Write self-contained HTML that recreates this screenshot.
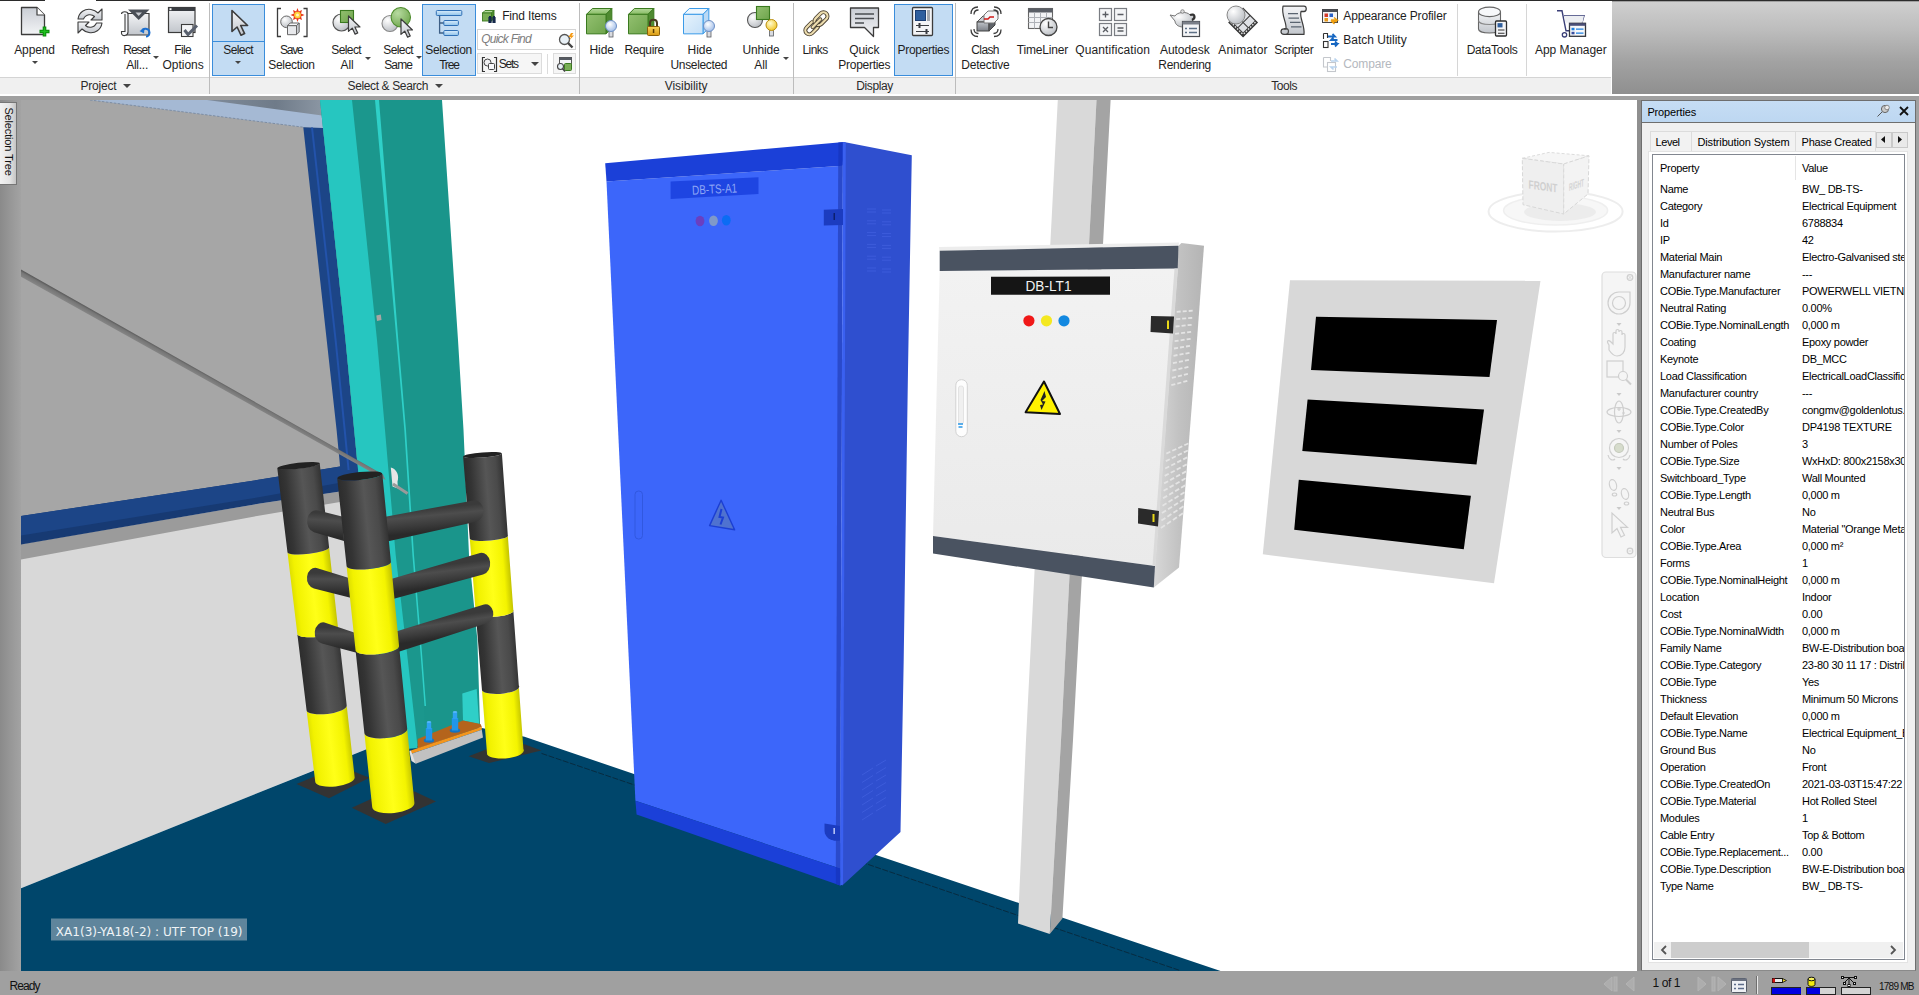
<!DOCTYPE html><html><head><meta charset="utf-8"><title>Navisworks</title><style>

*{box-sizing:border-box;margin:0;padding:0}
html,body{width:1919px;height:995px;overflow:hidden;background:#a0a0a0;font-family:"Liberation Sans",sans-serif;font-size:12px;color:#1e1e1e}
#app{position:relative;width:1919px;height:995px;overflow:hidden}
.abs{position:absolute}
#topline{left:0;top:0;width:1919px;height:1px;background:#2b2b2b}
#topgap{left:45px;top:0;width:51px;height:1px;background:#fff}
#ribbon{left:0;top:1px;width:1612px;height:94px;background:#fff}
#rlabels{left:0;top:77px;width:1611px;height:18px;background:#f0f0f0;border-top:1px solid #d4d4d4;border-bottom:1px solid #d9d9d9}
#rgray{left:1612px;top:2px;width:307px;height:92px;background:linear-gradient(#cfcfcf 0%,#bdbdbd 30%,#a2a2a2 65%,#8f8f8f 100%)}
#rwhite{left:0;top:94px;width:1919px;height:2px;background:#fff}
.gsep{position:absolute;top:0;width:1px;height:92px;background:#b9b9b9}
.gsep2{position:absolute;top:4px;width:1px;height:70px;background:#d5d5d5}
.glabel{position:absolute;top:77px;height:15px;line-height:15px;text-align:center;font-size:12px;color:#2a2a2a;white-space:nowrap}
.big{position:absolute;top:2px;text-align:center;white-space:nowrap;font-size:12px;line-height:15px;color:#1e1e1e}
.big svg{display:block;margin:1px auto 3px auto}
.big .t{display:block}
.hl{position:absolute;background:#c3dcf3;border:1px solid #3a8ddb}
.sm{position:absolute;height:20px;line-height:20px;white-space:nowrap;font-size:12px}
.sm svg{position:absolute;left:0;top:2px}
.sm span{position:absolute;left:22px;top:0}
.dd{position:absolute;width:0;height:0;border-left:3px solid transparent;border-right:3px solid transparent;border-top:3px solid #444}

.lsf{font-family:"Liberation Sans",sans-serif}.dvf{font-family:"DejaVu Sans","Liberation Sans",sans-serif}.tx{position:absolute;white-space:nowrap}.lt{position:absolute;white-space:nowrap;line-height:13px}
</style></head><body><div id="app">

<svg width="0" height="0" style="position:absolute"><defs>
<linearGradient id="gPage" x1="0" y1="0" x2="0" y2="1"><stop offset="0" stop-color="#c9cdd4"/><stop offset="1" stop-color="#f3f4f6"/></linearGradient>
<linearGradient id="gGray" x1="0" y1="0" x2="0" y2="1"><stop offset="0" stop-color="#f4f5f7"/><stop offset="1" stop-color="#c2c6cc"/></linearGradient>
<linearGradient id="gGreen" x1="0" y1="0" x2="1" y2="1"><stop offset="0" stop-color="#93c070"/><stop offset="1" stop-color="#6ea44c"/></linearGradient>
<linearGradient id="gGreenT" x1="0" y1="0" x2="0" y2="1"><stop offset="0" stop-color="#b4d99a"/><stop offset="1" stop-color="#86ba63"/></linearGradient>
<radialGradient id="gBulb" cx=".4" cy=".35" r=".7"><stop offset="0" stop-color="#ffffff"/><stop offset="1" stop-color="#9dbbe8"/></radialGradient>
<radialGradient id="gBulbY" cx=".4" cy=".35" r=".7"><stop offset="0" stop-color="#fffbd0"/><stop offset="1" stop-color="#f2c521"/></radialGradient>
<radialGradient id="gSph" cx=".35" cy=".3" r=".8"><stop offset="0" stop-color="#ffffff"/><stop offset="1" stop-color="#b5b9bf"/></radialGradient>
<radialGradient id="gSphG" cx=".35" cy=".3" r=".8"><stop offset="0" stop-color="#b7dba0"/><stop offset="1" stop-color="#6ea54c"/></radialGradient>
<linearGradient id="gBlueBar" x1="0" y1="0" x2="0" y2="1"><stop offset="0" stop-color="#d9ecfb"/><stop offset="1" stop-color="#8fc3ea"/></linearGradient>
<linearGradient id="gGold" x1="0" y1="0" x2="0" y2="1"><stop offset="0" stop-color="#fbd25a"/><stop offset="1" stop-color="#d89a12"/></linearGradient>
<linearGradient id="gLBlue" x1="0" y1="0" x2="1" y2="1"><stop offset="0" stop-color="#e6f2fc"/><stop offset="1" stop-color="#c5e0f7"/></linearGradient>
<linearGradient id="gDark" x1="0" y1="0" x2="0" y2="1"><stop offset="0" stop-color="#bfc3c9"/><stop offset="1" stop-color="#7c8087"/></linearGradient>
</defs></svg>

<div class="abs" id="topline"></div><div class="abs" id="topgap"></div>
<div class="abs" id="ribbon">
</div>
<div class="abs" id="rgray"></div>
<div class="abs" id="rlabels"></div>
<div class="abs" id="rwhite"></div>
<div class="hl" style="left:212px;top:4px;width:53px;height:72px"></div>
<div class="hl" style="left:422px;top:4px;width:53.5px;height:72px"></div>
<div class="hl" style="left:894px;top:4px;width:59px;height:72px"></div>
<div class="abs" style="left:213px;top:41px;width:51px;height:1px;background:#3a8ddb"></div>
<div class="abs" style="left:209px;top:3px;width:1px;height:91px;background:#bcbcbc"></div>
<div class="abs" style="left:579px;top:3px;width:1px;height:91px;background:#bcbcbc"></div>
<div class="abs" style="left:793px;top:3px;width:1px;height:91px;background:#bcbcbc"></div>
<div class="abs" style="left:955px;top:3px;width:1px;height:91px;background:#bcbcbc"></div>
<div class="abs" style="left:1457px;top:4px;width:1px;height:72px;background:#d6d6d6"></div>
<div class="abs" style="left:1526px;top:4px;width:1px;height:72px;background:#d6d6d6"></div>
<div class="abs" style="left:1611px;top:2px;width:1px;height:92px;background:#fff"></div>
<svg class="abs" style="left:19.0px;top:5px" width="32" height="32" viewBox="0 0 32 32" overflow="visible"><g transform="translate(-3 0)"><path d="M5.5,2.5 H21 L28.5,10 V29.5 H5.5 Z" fill="url(#gPage)" stroke="#3c3c3c" stroke-width="1.3" stroke-linejoin="round"/><path d="M21,2.5 V10 H28.5" fill="#fff" stroke="#3c3c3c" stroke-width="1.2" stroke-linejoin="round"/><path d="M28.5,21.5 V31.5 M23.5,26.5 H33.5" stroke="#0a8a0a" stroke-width="3.6"/><path d="M28.5,22.5 V30.5 M24.5,26.5 H32.5" stroke="#1fc01f" stroke-width="1.6"/></g></svg>
<span class="tx" style="left:14.2px;top:44.1px;font-size:12px;line-height:13.8px;letter-spacing:-0.11px;color:#1e1e1e;">Append</span>
<div class="dd" style="left:32px;top:61px"></div>
<svg class="abs" style="left:74.0px;top:5px" width="32" height="32" viewBox="0 0 32 32" overflow="visible"><path d="M4,14 C5,7 11,3.5 17,4.5 C20,5 22,6 24,8 L28,4 V15 H17 L20.5,11.5 C18,9 12,8.5 9.5,14 Z" fill="url(#gGray)" stroke="#3c3c3c" stroke-width="1.1" stroke-linejoin="round"/><path d="M28,18 C27,25 21,28.5 15,27.5 C12,27 10,26 8,24 L4,28 V17 H15 L11.5,20.5 C14,23 20,23.5 22.5,18 Z" fill="url(#gGray)" stroke="#3c3c3c" stroke-width="1.1" stroke-linejoin="round"/></svg>
<span class="tx" style="left:71.3px;top:44.1px;font-size:12px;line-height:13.8px;letter-spacing:-0.64px;color:#1e1e1e;">Refresh</span>
<svg class="abs" style="left:121.0px;top:5px" width="32" height="32" viewBox="0 0 32 32" overflow="visible"><path d="M7,8.500 H28 V30 H4" fill="url(#gGray)" stroke="#3c3c3c" stroke-width="1.200"/><path d="M0.500,9 C0.500,6 7,6 7,9 V27 C7,31 1,32 0.500,28.500 V26.500 H4 V9" fill="#f4f5f8" stroke="#3c3c3c" stroke-width="1.100"/><path d="M7,4.500 H28.500 L17.700,15 Z" fill="#4a4f57"/><path d="M14.500,7.500 H21 L17.700,11 Z" fill="#c9ccd2"/><path d="M20.500,26.500 C22,22.500 28,23 28.500,27.500 C28.500,30 26.500,31.500 25,31.500" fill="none" stroke="#1b6fd0" stroke-width="2"/><path d="M18.500,26 L23.500,23.500 L23,28.500 Z" fill="#1b6fd0"/></svg>
<span class="tx" style="left:123.3px;top:44.1px;font-size:12px;line-height:13.8px;letter-spacing:-1.04px;color:#1e1e1e;">Reset</span>
<span class="tx" style="left:126.2px;top:58.7px;font-size:12px;line-height:13.8px;letter-spacing:-0.25px;color:#1e1e1e;">All...</span>
<div class="dd" style="left:153px;top:56px"></div>
<svg class="abs" style="left:167.0px;top:5px" width="32" height="32" viewBox="0 0 32 32" overflow="visible"><rect x="1.500" y="2.500" width="26.500" height="25" fill="url(#gGray)" stroke="#3c3c3c" stroke-width="1.200"/><rect x="1.500" y="2.500" width="26.500" height="3.500" fill="#3a3d42"/><rect x="2.500" y="3.200" width="2" height="2" fill="#fff"/><rect x="14.500" y="19.500" width="11.500" height="12" fill="#f4f5f7" stroke="#3c3c3c" stroke-width="1.100"/><path d="M17.500,25 L21,29.500 L30,20.500" fill="none" stroke="#59606e" stroke-width="3"/></svg>
<span class="tx" style="left:174.2px;top:44.1px;font-size:12px;line-height:13.8px;letter-spacing:-0.61px;color:#1e1e1e;">File</span>
<span class="tx" style="left:162.5px;top:58.7px;font-size:12px;line-height:13.8px;letter-spacing:-0.03px;color:#1e1e1e;">Options</span>
<svg class="abs" style="left:222.0px;top:5px" width="32" height="32" viewBox="0 0 32 32" overflow="visible"><path transform="translate(10,5.5) scale(1.5)" d="M0,0 L0,14 L3.4,11 L6,16.5 L8.4,15.4 L5.8,10 L10.4,10 Z" fill="url(#gGray)" stroke="#3c3c3c" stroke-width="1.1" stroke-linejoin="round"/></svg>
<span class="tx" style="left:223.3px;top:44.1px;font-size:12px;line-height:13.8px;letter-spacing:-0.59px;color:#1e1e1e;">Select</span>
<div class="dd" style="left:235px;top:61px"></div>
<svg class="abs" style="left:276.0px;top:5px" width="32" height="32" viewBox="0 0 32 32" overflow="visible"><path d="M5,3.500 H1.500 V31.500 H5 M27.500,3.500 H31 V31.500 H27.500" fill="none" stroke="#3c3c3c" stroke-width="1.300"/><circle cx="10.500" cy="16.800" r="5.800" fill="url(#gSph)" stroke="#666" stroke-width="1"/><path d="M11.5,20.7 L14.2,18 L23.2,18 L20.5,20.7 Z" fill="#f6f6f8" stroke="#666" stroke-width="1" stroke-linejoin="round"/><path d="M20.5,20.7 L23.2,18 L23.2,27 L20.5,29.7 Z" fill="#c9cbd0" stroke="#666" stroke-width="1" stroke-linejoin="round"/><rect x="11.5" y="20.7" width="9" height="9" fill="#e8e9ec" stroke="#666" stroke-width="1" stroke-linejoin="round"/><g transform="translate(-1.500 1.500)"><path d="M23,1.500 L24.300,5 L27.500,3.500 L26.500,7 L30,8.500 L26.500,10 L27.500,13.500 L24.300,12 L23,15.500 L21.700,12 L18.500,13.500 L19.500,10 L16,8.500 L19.500,7 L18.500,3.500 L21.700,5 Z" fill="#e8381a"/><circle cx="23" cy="8.500" r="3.300" fill="#ffd23a"/><circle cx="23" cy="8.500" r="1.500" fill="#fff8c0"/></g></svg>
<span class="tx" style="left:280.0px;top:44.1px;font-size:12px;line-height:13.8px;letter-spacing:-1.20px;color:#1e1e1e;">Save</span>
<span class="tx" style="left:268.3px;top:58.7px;font-size:12px;line-height:13.8px;letter-spacing:-0.33px;color:#1e1e1e;">Selection</span>
<svg class="abs" style="left:330.5px;top:5px" width="32" height="32" viewBox="0 0 32 32" overflow="visible"><circle cx="10.500" cy="17.500" r="8.500" fill="url(#gSph)" stroke="#555" stroke-width="1.200"/><rect x="9.500" y="5.500" width="13" height="12" fill="url(#gGreen)" stroke="#3a7a1f" stroke-width="1.100"/><path transform="translate(17.5,11) scale(1.1)" d="M0,0 L0,14 L3.4,11 L6,16.5 L8.4,15.4 L5.8,10 L10.4,10 Z" fill="url(#gGray)" stroke="#3c3c3c" stroke-width="1.1" stroke-linejoin="round"/></svg>
<span class="tx" style="left:331.3px;top:44.1px;font-size:12px;line-height:13.8px;letter-spacing:-0.59px;color:#1e1e1e;">Select</span>
<span class="tx" style="left:340.5px;top:58.7px;font-size:12px;line-height:13.8px;letter-spacing:-0.07px;color:#1e1e1e;">All</span>
<div class="dd" style="left:365px;top:57px"></div>
<svg class="abs" style="left:382.0px;top:5px" width="32" height="32" viewBox="0 0 32 32" overflow="visible"><circle cx="8" cy="18.500" r="8" fill="url(#gSph)" stroke="#888" stroke-width="1.100"/><circle cx="18.800" cy="12.200" r="9.700" fill="url(#gSphG)" stroke="#4d8c2c" stroke-width="1.100"/><path transform="translate(19,14) scale(1.1)" d="M0,0 L0,14 L3.4,11 L6,16.5 L8.4,15.4 L5.8,10 L10.4,10 Z" fill="url(#gGray)" stroke="#3c3c3c" stroke-width="1.1" stroke-linejoin="round"/></svg>
<span class="tx" style="left:383.3px;top:44.1px;font-size:12px;line-height:13.8px;letter-spacing:-0.59px;color:#1e1e1e;">Select</span>
<span class="tx" style="left:384.2px;top:58.7px;font-size:12px;line-height:13.8px;letter-spacing:-0.85px;color:#1e1e1e;">Same</span>
<div class="dd" style="left:416px;top:56px"></div>
<svg class="abs" style="left:433.0px;top:5px" width="32" height="32" viewBox="0 0 32 32" overflow="visible"><path d="M6.600,10.500 V28 H11 M6.600,18 H11" fill="none" stroke="#3d5f86" stroke-width="1.300"/><rect x="3.300" y="5.500" width="25.500" height="5" rx="1" fill="url(#gBlueBar)" stroke="#2f6fb5" stroke-width="1"/><rect x="10.800" y="15.500" width="14.600" height="5" rx="1" fill="url(#gBlueBar)" stroke="#2f6fb5" stroke-width="1"/><rect x="10.800" y="25.500" width="14.600" height="5" rx="1" fill="url(#gBlueBar)" stroke="#2f6fb5" stroke-width="1"/></svg>
<span class="tx" style="left:425.3px;top:44.1px;font-size:12px;line-height:13.8px;letter-spacing:-0.31px;color:#1e1e1e;">Selection</span>
<span class="tx" style="left:439.2px;top:58.7px;font-size:12px;line-height:13.8px;letter-spacing:-1.20px;color:#1e1e1e;">Tree</span>
<svg class="abs" style="left:585.5px;top:5px" width="32" height="32" viewBox="0 0 32 32" overflow="visible"><path d="M0.5,9.35 L6.35,3.5 L25.85,3.5 L20.0,9.35 Z" fill="url(#gGreenT)" stroke="#3a7a1f" stroke-width="1" stroke-linejoin="round"/><path d="M20.0,9.35 L25.85,3.5 L25.85,23.0 L20.0,28.85 Z" fill="#4f8a30" stroke="#3a7a1f" stroke-width="1" stroke-linejoin="round"/><rect x="0.5" y="9.35" width="19.5" height="19.5" fill="url(#gGreen)" stroke="#3a7a1f" stroke-width="1" stroke-linejoin="round"/><rect x="23" y="25.5" width="4" height="6.500" fill="#d9dbe0" stroke="#5a5d63" stroke-width=".8"/><circle cx="25" cy="21" r="5.5" fill="url(#gBulb)" stroke="#6d8fc5" stroke-width="1"/></svg>
<span class="tx" style="left:589.5px;top:44.1px;font-size:12px;line-height:13.8px;letter-spacing:-0.06px;color:#1e1e1e;">Hide</span>
<svg class="abs" style="left:628.0px;top:5px" width="32" height="32" viewBox="0 0 32 32" overflow="visible"><path d="M0.5,9.35 L6.35,3.5 L25.85,3.5 L20.0,9.35 Z" fill="url(#gGreenT)" stroke="#3a7a1f" stroke-width="1" stroke-linejoin="round"/><path d="M20.0,9.35 L25.85,3.5 L25.85,23.0 L20.0,28.85 Z" fill="#4f8a30" stroke="#3a7a1f" stroke-width="1" stroke-linejoin="round"/><rect x="0.5" y="9.35" width="19.5" height="19.5" fill="url(#gGreen)" stroke="#3a7a1f" stroke-width="1" stroke-linejoin="round"/><path d="M22,21 V18 C22,13.500 29,13.500 29,18 V21" fill="none" stroke="#4a3a20" stroke-width="2"/><rect x="19.500" y="21.500" width="12" height="9" rx="1" fill="url(#gGold)" stroke="#8a5f08" stroke-width="1"/><rect x="24.800" y="24" width="1.500" height="4" fill="#5a3c05"/></svg>
<span class="tx" style="left:624.5px;top:44.1px;font-size:12px;line-height:13.8px;letter-spacing:-0.39px;color:#1e1e1e;">Require</span>
<svg class="abs" style="left:683.0px;top:5px" width="32" height="32" viewBox="0 0 32 32" overflow="visible"><path d="M0.5,9.35 L6.35,3.5 L25.85,3.5 L20.0,9.35 Z" fill="#eef7fe" stroke="#3b9be8" stroke-width="1" stroke-linejoin="round"/><path d="M20.0,9.35 L25.85,3.5 L25.85,23.0 L20.0,28.85 Z" fill="#b9d9f5" stroke="#3b9be8" stroke-width="1" stroke-linejoin="round"/><rect x="0.5" y="9.35" width="19.5" height="19.5" fill="url(#gLBlue)" stroke="#3b9be8" stroke-width="1" stroke-linejoin="round"/><rect x="24" y="25.5" width="4" height="6.500" fill="#d9dbe0" stroke="#5a5d63" stroke-width=".8"/><circle cx="26" cy="21" r="5.5" fill="url(#gBulb)" stroke="#6d8fc5" stroke-width="1"/></svg>
<span class="tx" style="left:687.5px;top:44.1px;font-size:12px;line-height:13.8px;letter-spacing:0.01px;color:#1e1e1e;">Hide</span>
<span class="tx" style="left:670.5px;top:58.7px;font-size:12px;line-height:13.8px;letter-spacing:-0.34px;color:#1e1e1e;">Unselected</span>
<svg class="abs" style="left:745.0px;top:5px" width="32" height="32" viewBox="0 0 32 32" overflow="visible"><circle cx="10" cy="15" r="7.500" fill="url(#gSph)" stroke="#555" stroke-width="1.1"/><rect x="11.500" y="1.500" width="13" height="13" fill="url(#gGreen)" stroke="#3a7a1f" stroke-width="1.1"/><rect x="24.5" y="24.5" width="4" height="6.500" fill="#d9dbe0" stroke="#5a5d63" stroke-width=".8"/><circle cx="26.5" cy="20" r="5.5" fill="url(#gBulbY)" stroke="#b98d10" stroke-width="1"/></svg>
<span class="tx" style="left:742.5px;top:44.1px;font-size:12px;line-height:13.8px;letter-spacing:-0.16px;color:#1e1e1e;">Unhide</span>
<span class="tx" style="left:754.2px;top:58.7px;font-size:12px;line-height:13.8px;letter-spacing:-0.02px;color:#1e1e1e;">All</span>
<div class="dd" style="left:783px;top:57px"></div>
<svg class="abs" style="left:799.5px;top:5px" width="32" height="32" viewBox="0 0 32 32" overflow="visible"><g transform="rotate(-45 16.400 18.300)" fill="none"><rect x="2.400" y="14.300" width="15" height="8" rx="4" stroke="#4a4030" stroke-width="4"/><rect x="2.400" y="14.300" width="15" height="8" rx="4" stroke="#ecdcae" stroke-width="2.200"/><rect x="15.400" y="14.300" width="15" height="8" rx="4" stroke="#4a4030" stroke-width="4"/><rect x="15.400" y="14.300" width="15" height="8" rx="4" stroke="#ecdcae" stroke-width="2.200"/><path d="M11,18.300 H22" stroke="#4a4030" stroke-width="4" stroke-linecap="round"/><path d="M11,18.300 H22" stroke="#ecdcae" stroke-width="2.200" stroke-linecap="round"/></g></svg>
<span class="tx" style="left:802.5px;top:44.1px;font-size:12px;line-height:13.8px;letter-spacing:-0.55px;color:#1e1e1e;">Links</span>
<svg class="abs" style="left:848.0px;top:5px" width="32" height="32" viewBox="0 0 32 32" overflow="visible"><path d="M2.500,3 H30.500 V22.500 H25.500 V31.500 L16.500,22.500 H2.500 Z" fill="url(#gPage)" stroke="#3c3c3c" stroke-width="1.3" stroke-linejoin="round"/><path d="M7,9 H26 M7,13.500 H26 M7,18 H16" stroke="#4a4d52" stroke-width="1.600"/></svg>
<span class="tx" style="left:849.2px;top:44.1px;font-size:12px;line-height:13.8px;letter-spacing:-0.09px;color:#1e1e1e;">Quick</span>
<span class="tx" style="left:838.3px;top:58.7px;font-size:12px;line-height:13.8px;letter-spacing:-0.28px;color:#1e1e1e;">Properties</span>
<svg class="abs" style="left:907.5px;top:5px" width="32" height="32" viewBox="0 0 32 32" overflow="visible"><g transform="translate(-2 0)"><rect x="6.500" y="2.500" width="20" height="28" rx="1" fill="#f4f5f7" stroke="#3c3c3c" stroke-width="1.300"/><rect x="9.500" y="5.500" width="10" height="10" fill="#2f5f9e" stroke="#1d3f73" stroke-width="1"/><rect x="21" y="5" width="3" height="11" fill="#a4a8ae"/><path d="M10,20.500 H23 M10,26.500 H23" stroke="#3a3d42" stroke-width="1.200"/><path d="M13.500,18 V23 M20.500,24 V29" stroke="#3a3d42" stroke-width="2"/></g></svg>
<span class="tx" style="left:897.5px;top:44.1px;font-size:12px;line-height:13.8px;letter-spacing:-0.30px;color:#1e1e1e;">Properties</span>
<svg class="abs" style="left:969.5px;top:5px" width="32" height="32" viewBox="0 0 32 32" overflow="visible"><path d="M7,17 L13,11 H25 L19,17 Z" fill="#c9ccd1" stroke="#555" stroke-width="1"/><rect x="7" y="17" width="12" height="9" fill="url(#gDark)" stroke="#444" stroke-width="1"/><path d="M19,17 L25,11 V20 L19,26 Z" fill="#5f6369" stroke="#444" stroke-width="1"/><path d="M14,10 L18,6 H28 V14 L24,18 H14 Z" fill="#f5f5f7" stroke="#777" stroke-width="1"/><path d="M14,14 H18 L20,12 H24" fill="none" stroke="#d01818" stroke-width="1.400"/><path d="M1,9 C1,4.500 3.500,2 8,2 M4,9.500 C4,6.500 5.500,5 8.500,5 M31,9 C31,4.500 28.500,2 24,2 M28,9.500 C28,6.500 26.500,5 23.500,5 M1,24.500 C1,29 3.500,31.500 8,31.500 M4,24 C4,27 5.500,28.500 8.500,28.500 M31,24.500 C31,29 28.500,31.500 24,31.500 M28,24 C28,27 26.500,28.500 23.500,28.500" fill="none" stroke="#3c3c3c" stroke-width="1.300"/></svg>
<span class="tx" style="left:971.3px;top:44.1px;font-size:12px;line-height:13.8px;letter-spacing:-0.62px;color:#1e1e1e;">Clash</span>
<span class="tx" style="left:961.3px;top:58.7px;font-size:12px;line-height:13.8px;letter-spacing:-0.20px;color:#1e1e1e;">Detective</span>
<svg class="abs" style="left:1026.0px;top:5px" width="32" height="32" viewBox="0 0 32 32" overflow="visible"><rect x="2.500" y="3.500" width="24" height="20" fill="#f2f3f5" stroke="#666" stroke-width="1.100"/><rect x="2.500" y="3.500" width="24" height="4" fill="#5a5e66"/><path d="M2.500,12.500 H26.500 M2.500,17.500 H26.500 M8.500,7.500 V23.500 M14.500,7.500 V23.500 M20.500,7.500 V23.500" stroke="#aeb1b7" stroke-width="1"/><circle cx="22.500" cy="22" r="8.500" fill="url(#gSph)" stroke="#444" stroke-width="1.300"/><path d="M22.500,16.500 V22.500 H27" fill="none" stroke="#444" stroke-width="1.400"/></svg>
<span class="tx" style="left:1016.7px;top:44.1px;font-size:12px;line-height:13.8px;letter-spacing:-0.16px;color:#1e1e1e;">TimeLiner</span>
<svg class="abs" style="left:1096.5px;top:5px" width="32" height="32" viewBox="0 0 32 32" overflow="visible"><rect x="2.5" y="3.5" width="12" height="12" fill="#f4f5f7" stroke="#7a7d83" stroke-width="1.200"/><rect x="17.5" y="3.5" width="12" height="12" fill="#f4f5f7" stroke="#7a7d83" stroke-width="1.200"/><rect x="2.5" y="18.5" width="12" height="12" fill="#f4f5f7" stroke="#7a7d83" stroke-width="1.200"/><rect x="17.5" y="18.5" width="12" height="12" fill="#f4f5f7" stroke="#7a7d83" stroke-width="1.200"/><path d="M5.500,9.500 H11.500 M8.500,6.500 V12.500 M20.500,9.500 H26.500 M6,22 L11,27 M11,22 L6,27 M20.500,23 H26.500 M20.500,26 H26.500" stroke="#5a5d63" stroke-width="1.300" fill="none"/></svg>
<span class="tx" style="left:1075.3px;top:44.1px;font-size:12px;line-height:13.8px;letter-spacing:0.10px;color:#1e1e1e;">Quantification</span>
<svg class="abs" style="left:1169.0px;top:5px" width="32" height="32" viewBox="0 0 32 32" overflow="visible"><g transform="translate(0 2)"><path d="M1,8 L6,9 C8,5 18,4 21,8 C25,6 27,10 23,14 C22,18 18,20 14,20 C9,20 6,17 6,14 Z" fill="url(#gSph)" stroke="#777" stroke-width="1"/><circle cx="13.500" cy="4.500" r="1.800" fill="#ddd" stroke="#777" stroke-width=".8"/><path d="M21,8 C26,6 27,11 23,13" fill="none" stroke="#333" stroke-width="2.200"/><rect x="13.500" y="14.500" width="17" height="15" fill="#f4f5f7" stroke="#4a4d52" stroke-width="1.200"/><rect x="13.500" y="14.500" width="17" height="3" fill="#7b8089"/><path d="M16,21.500 H18 M20,21.500 H28 M16,25.500 H18 M20,25.500 H28" stroke="#5d7086" stroke-width="1.400"/></g></svg>
<span class="tx" style="left:1160.0px;top:44.1px;font-size:12px;line-height:13.8px;letter-spacing:-0.05px;color:#1e1e1e;">Autodesk</span>
<span class="tx" style="left:1158.3px;top:58.7px;font-size:12px;line-height:13.8px;letter-spacing:-0.30px;color:#1e1e1e;">Rendering</span>
<svg class="abs" style="left:1226.5px;top:5px" width="32" height="32" viewBox="0 0 32 32" overflow="visible"><g transform="translate(-2.500 -0.500)"><g transform="rotate(45 20 18)"><rect x="9" y="9" width="20" height="20" fill="#dfe1e5" stroke="#3c3c3c" stroke-width="1.200"/><path d="M9,19 H29 M19,9 V29" stroke="#3c3c3c" stroke-width="1"/><rect x="9" y="26" width="20" height="3" fill="#3c3c3c"/><rect x="26" y="9" width="3" height="20" fill="#3c3c3c"/><path d="M10,27.500 H28 M27.500,10 V28" stroke="#f0f0f0" stroke-width="1.300" stroke-dasharray="1.500 1.500"/></g><circle cx="11.500" cy="10.500" r="9" fill="url(#gSph)" stroke="#888" stroke-width="1"/></g></svg>
<span class="tx" style="left:1218.3px;top:44.1px;font-size:12px;line-height:13.8px;letter-spacing:0.17px;color:#1e1e1e;">Animator</span>
<svg class="abs" style="left:1277.5px;top:5px" width="32" height="32" viewBox="0 0 32 32" overflow="visible"><g transform="translate(-1 -2.200) scale(1 1.090)"><path d="M6,3 H27 C30,3 30,8 27,8 H24 C22,14 28,20 27,29 H7 C3,29 3,24 7,24 H9 C10,18 4,12 6,3 Z" fill="url(#gGray)" stroke="#3c3c3c" stroke-width="1.200" stroke-linejoin="round"/><path d="M7,24 H10 C12,24 12,29 9,29" fill="none" stroke="#3c3c3c" stroke-width="1.100"/><path d="M11,10 H21 M11.500,14 H22 M13,18 H23.500 M14,22 H24.500" stroke="#5a6470" stroke-width="1.100"/></g></svg>
<span class="tx" style="left:1274.2px;top:44.1px;font-size:12px;line-height:13.8px;letter-spacing:-0.26px;color:#1e1e1e;">Scripter</span>
<svg class="abs" style="left:1476.0px;top:5px" width="32" height="32" viewBox="0 0 32 32" overflow="visible"><g transform="translate(0 -0.600) scale(1 1.070)"><path d="M2.500,7 V23 C2.500,28 24.500,28 24.500,23 V7" fill="url(#gGray)" stroke="#666" stroke-width="1.100"/><path d="M2.500,15 C2.500,20 24.500,20 24.500,15" fill="none" stroke="#888" stroke-width="1"/><ellipse cx="13.500" cy="7" rx="11" ry="4.500" fill="#f7f8fa" stroke="#666" stroke-width="1.100"/><rect x="19.500" y="15.500" width="11" height="14" rx="1" fill="#f4f5f7" stroke="#2d2d2d" stroke-width="1.300"/><rect x="21.500" y="17.500" width="5" height="4" fill="#2f5f9e"/><path d="M22,24 H28.500 M22,27 H28.500" stroke="#333" stroke-width="1"/></g></svg>
<span class="tx" style="left:1466.7px;top:44.1px;font-size:12px;line-height:13.8px;letter-spacing:-0.28px;color:#1e1e1e;">DataTools</span>
<svg class="abs" style="left:1554.5px;top:5px" width="32" height="32" viewBox="0 0 32 32" overflow="visible"><g transform="translate(0 1.800)"><path d="M2,4 H7 L11,24 H27 M9,9 H29 L27,16" fill="none" stroke="#3a3f78" stroke-width="1.400"/><path d="M9,9 H29 L27.500,16 H10.500 Z" fill="#eceef2"/><circle cx="9.500" cy="28" r="2.200" fill="#fff" stroke="#3a3f78" stroke-width="1.300"/><rect x="14.500" y="16.500" width="16" height="13" fill="#f7f8fa" stroke="#33363c" stroke-width="1.300"/><rect x="14.500" y="16.500" width="16" height="2.500" fill="#4a4f78"/><rect x="16.500" y="21" width="3" height="2.500" fill="#1f7fe0"/><rect x="16.500" y="25" width="3" height="2.500" fill="#3a4fa0"/><path d="M21,22.300 H28.500 M21,26.300 H28.500" stroke="#1f7fe0" stroke-width="1.300"/></g></svg>
<span class="tx" style="left:1535.0px;top:44.1px;font-size:12px;line-height:13.8px;letter-spacing:-0.03px;color:#1e1e1e;">App Manager</span>
<svg class="abs" style="left:1322px;top:8px" width="16" height="16" viewBox="0 0 16 16" overflow="visible"><rect x=".500" y="1.500" width="15" height="13" fill="#f4f5f7" stroke="#444" stroke-width="1"/><rect x=".500" y="1.500" width="15" height="2.500" fill="#4a4d55"/><rect x="2.500" y="5.500" width="3.500" height="3.500" fill="#d43a2a"/><rect x="7.500" y="5.500" width="3.500" height="3.500" fill="#2a62c8"/><rect x="2.500" y="10" width="3.500" height="3.500" fill="#e89a1c"/><path d="M9,12 H15 L12,9.500 M15,13.500 H10 L12.500,16" fill="none" stroke="#f0a010" stroke-width="1.500"/></svg>
<span class="tx" style="left:1343.3px;top:10.4px;font-size:12px;line-height:13.8px;letter-spacing:-0.15px;color:#1e1e1e;">Appearance Profiler</span>
<svg class="abs" style="left:1322px;top:32px" width="16" height="16" viewBox="0 0 16 16" overflow="visible"><path d="M1.500,1.500 H5.500 V6 M1.500,1.500 V7" fill="none" stroke="#333" stroke-width="1.100"/><rect x="1.500" y="9.500" width="4.500" height="6" fill="#fff" stroke="#333" stroke-width="1.100"/><path d="M6,4.500 H13 L10.500,2 M15.500,8 H9 L11.500,5.500 M9,12 H15.500 L13,14.500 M13,9.500 L15.500,12" fill="none" stroke="#1767c2" stroke-width="1.800"/></svg>
<span class="tx" style="left:1343.3px;top:34.4px;font-size:12px;line-height:13.8px;letter-spacing:0.00px;color:#1e1e1e;">Batch Utility</span>
<svg class="abs" style="left:1322px;top:56px" width="16" height="16" viewBox="0 0 16 16" overflow="visible"><path d="M1.500,1.500 H8.500 V5 M1.500,1.500 V11 H5" fill="none" stroke="#c4c7cc" stroke-width="1.100"/><rect x="5.500" y="6.500" width="8" height="9" fill="#fff" stroke="#c4c7cc" stroke-width="1.100"/><path d="M9,5 H15 L12.500,2.500 M15,11 H9 L11.500,13.500" fill="none" stroke="#b9d3ee" stroke-width="1.700"/></svg>
<span class="tx" style="left:1343.3px;top:58.4px;font-size:12px;line-height:13.8px;letter-spacing:-0.16px;color:#b4b8be;">Compare</span>
<svg class="abs" style="left:481px;top:8px" width="16" height="16" viewBox="0 0 16 16" overflow="visible"><path d="M1.500,5 L4,2.500 H13 L10.500,5 Z" fill="#b4d99a" stroke="#3a7a1f" stroke-width=".9"/><rect x="1.500" y="5" width="9" height="8" fill="#79ad55" stroke="#3a7a1f" stroke-width=".9"/><path d="M10.500,5 L13,2.500 V10 L10.500,13 Z" fill="#4f8a30" stroke="#3a7a1f" stroke-width=".9"/><path d="M9,9 V15 M13,9 V15" stroke="#14284a" stroke-width="3.200"/><path d="M9,8 V11 M13,8 V11" stroke="#14284a" stroke-width="2"/></svg>
<span class="tx" style="left:502.2px;top:10.4px;font-size:12px;line-height:13.8px;letter-spacing:-0.17px;color:#1e1e1e;">Find Items</span>
<div class="abs" style="left:477px;top:29px;width:99px;height:21px;border:1px solid #d4d4d4;background:#fff"></div>
<span class="tx" style="left:481.2px;top:33.1px;font-size:12px;line-height:13.8px;letter-spacing:-0.76px;color:#7d7d7d;font-style:italic;">Quick Find</span>
<svg class="abs" style="left:558px;top:32px" width="16" height="16" viewBox="0 0 16 16" overflow="visible"><circle cx="6.500" cy="7.500" r="5" fill="#e9f1f7" stroke="#555" stroke-width="1.300"/><path d="M10,11 L14.500,15.500" stroke="#444" stroke-width="2.400"/><path d="M13,1 L10.500,5 H13 L11,8.500 L16,3.500 H13.500 L15.500,1 Z" fill="#f59a14"/></svg>
<div class="abs" style="left:477px;top:53px;width:65px;height:21px;border:1px solid #dcdcdc;background:#f6f6f6"></div>
<svg class="abs" style="left:481px;top:56px" width="16" height="16" viewBox="0 0 16 16" overflow="visible"><path d="M4,1.500 H1.500 V15.500 H4 M13,1.500 H15.500 V15.500 H13" fill="none" stroke="#333" stroke-width="1.200"/><circle cx="6.500" cy="6.500" r="3.500" fill="#f0f0f2" stroke="#444" stroke-width="1"/><rect x="7.500" y="7.500" width="6" height="6" rx="1" fill="#f7f7f9" stroke="#444" stroke-width="1"/></svg>
<span class="tx" style="left:498.7px;top:58.3px;font-size:12px;line-height:13.8px;letter-spacing:-1.20px;color:#1e1e1e;">Sets</span>
<div class="dd" style="left:531px;top:62px;border-left-width:4px;border-right-width:4px;border-top-width:4px"></div>
<div class="abs" style="left:547px;top:54px;width:1px;height:20px;background:#dcdcdc"></div>
<div class="abs" style="left:553px;top:53px;width:23px;height:21px;border:1px solid #dcdcdc;background:#f6f6f6"></div>
<svg class="abs" style="left:556px;top:56px" width="16" height="16" viewBox="0 0 16 16" overflow="visible"><rect x="3.500" y="1.500" width="12" height="9" fill="#f4f5f7" stroke="#555" stroke-width="1"/><rect x="3.500" y="1.500" width="12" height="2.500" fill="#555a62"/><rect x="8.500" y="7.500" width="7" height="7" rx="1" fill="#79ad55" stroke="#3a7a1f" stroke-width="1"/><circle cx="4.500" cy="10.500" r="3" fill="#e9f1f7" stroke="#444" stroke-width="1.100"/><path d="M6.500,12.500 L9,15.500" stroke="#444" stroke-width="1.600"/></svg>
<span class="tx" style="left:80.5px;top:80.1px;font-size:12px;line-height:13.8px;letter-spacing:-0.19px;color:#2a2a2a;">Project</span>
<div class="dd" style="left:123px;top:84px;border-left-width:4px;border-right-width:4px;border-top-width:4px"></div>
<span class="tx" style="left:347.5px;top:80.1px;font-size:12px;line-height:13.8px;letter-spacing:-0.37px;color:#2a2a2a;">Select &amp; Search</span>
<div class="dd" style="left:435px;top:84px;border-left-width:4px;border-right-width:4px;border-top-width:4px"></div>
<span class="tx" style="left:664.7px;top:80.1px;font-size:12px;line-height:13.8px;letter-spacing:-0.04px;color:#2a2a2a;">Visibility</span>
<span class="tx" style="left:856.2px;top:80.1px;font-size:12px;line-height:13.8px;letter-spacing:-0.37px;color:#2a2a2a;">Display</span>
<span class="tx" style="left:1271.2px;top:80.1px;font-size:12px;line-height:13.8px;letter-spacing:-0.43px;color:#2a2a2a;">Tools</span>
<div class="abs" style="left:0;top:96px;width:1919px;height:4px;background:#a0a0a0"></div>
<div class="abs" style="left:0;top:100px;width:21px;height:871px;background:linear-gradient(90deg,#8a8a8a,#979797 50%,#a3a3a3)"></div>
<div class="abs" style="left:0;top:102px;width:17px;height:83px;background:linear-gradient(90deg,#f2f2f2,#e4e4e4 60%,#c4c4c4);border:1px solid #767676;border-left:none"></div>
<div class="abs" style="left:-33.500px;top:134.500px;width:83px;height:13px;line-height:13px;font-size:11px;letter-spacing:-0.15px;text-align:center;transform:rotate(90deg);color:#111;white-space:nowrap">Selection Tree</div>
<div class="abs" style="left:21px;top:100px;width:1616px;height:871px;background:#fff;overflow:hidden">
<svg width="1616" height="871" viewBox="21 100 1616 871" style="position:absolute;left:0;top:0" shape-rendering="geometricPrecision"><defs><linearGradient id="gpld" gradientUnits="userSpaceOnUse" x1="276.0" y1="465.8" x2="321.0" y2="465.8" gradientTransform="rotate(-6.63 298.5 465.8)"><stop offset="0" stop-color="#2b2b2b"/><stop offset="0.18" stop-color="#343434"/><stop offset="0.55" stop-color="#565656"/><stop offset="0.8" stop-color="#4a4a4a"/><stop offset="1" stop-color="#2f2f2f"/></linearGradient><linearGradient id="gply" gradientUnits="userSpaceOnUse" x1="276.0" y1="465.8" x2="321.0" y2="465.8" gradientTransform="rotate(-6.63 298.5 465.8)"><stop offset="0" stop-color="#d9d900"/><stop offset="0.15" stop-color="#f2f200"/><stop offset="0.5" stop-color="#ffff18"/><stop offset="0.8" stop-color="#f4f400"/><stop offset="1" stop-color="#b9b900"/></linearGradient><linearGradient id="gpmd" gradientUnits="userSpaceOnUse" x1="336.0" y1="476.0" x2="383.5" y2="476.0" gradientTransform="rotate(-5.82 359.8 476.0)"><stop offset="0" stop-color="#2b2b2b"/><stop offset="0.18" stop-color="#343434"/><stop offset="0.55" stop-color="#565656"/><stop offset="0.8" stop-color="#4a4a4a"/><stop offset="1" stop-color="#2f2f2f"/></linearGradient><linearGradient id="gpmy" gradientUnits="userSpaceOnUse" x1="336.0" y1="476.0" x2="383.5" y2="476.0" gradientTransform="rotate(-5.82 359.8 476.0)"><stop offset="0" stop-color="#d9d900"/><stop offset="0.15" stop-color="#f2f200"/><stop offset="0.5" stop-color="#ffff18"/><stop offset="0.8" stop-color="#f4f400"/><stop offset="1" stop-color="#b9b900"/></linearGradient><linearGradient id="gprd" gradientUnits="userSpaceOnUse" x1="462.0" y1="455.0" x2="503.0" y2="455.0" gradientTransform="rotate(-4.38 482.5 455.0)"><stop offset="0" stop-color="#2b2b2b"/><stop offset="0.18" stop-color="#343434"/><stop offset="0.55" stop-color="#565656"/><stop offset="0.8" stop-color="#4a4a4a"/><stop offset="1" stop-color="#2f2f2f"/></linearGradient><linearGradient id="gpry" gradientUnits="userSpaceOnUse" x1="462.0" y1="455.0" x2="503.0" y2="455.0" gradientTransform="rotate(-4.38 482.5 455.0)"><stop offset="0" stop-color="#d9d900"/><stop offset="0.15" stop-color="#f2f200"/><stop offset="0.5" stop-color="#ffff18"/><stop offset="0.8" stop-color="#f4f400"/><stop offset="1" stop-color="#b9b900"/></linearGradient><linearGradient id="b1l" gradientUnits="userSpaceOnUse" x1="330.5" y1="513.6" x2="329.0" y2="536.6"><stop offset="0" stop-color="#3a3a3a"/><stop offset=".3" stop-color="#4d4d4d"/><stop offset=".7" stop-color="#3a3a3a"/><stop offset="1" stop-color="#2a2a2a"/></linearGradient><linearGradient id="b2l" gradientUnits="userSpaceOnUse" x1="332.8" y1="573.0" x2="332.8" y2="593.2"><stop offset="0" stop-color="#3a3a3a"/><stop offset=".3" stop-color="#4d4d4d"/><stop offset=".7" stop-color="#3a3a3a"/><stop offset="1" stop-color="#2a2a2a"/></linearGradient><linearGradient id="b3l" gradientUnits="userSpaceOnUse" x1="340.1" y1="627.7" x2="339.8" y2="648.2"><stop offset="0" stop-color="#3a3a3a"/><stop offset=".3" stop-color="#4d4d4d"/><stop offset=".7" stop-color="#3a3a3a"/><stop offset="1" stop-color="#2a2a2a"/></linearGradient><linearGradient id="b1r" gradientUnits="userSpaceOnUse" x1="428.8" y1="508.6" x2="431.0" y2="531.8"><stop offset="0" stop-color="#3a3a3a"/><stop offset=".3" stop-color="#4d4d4d"/><stop offset=".7" stop-color="#3a3a3a"/><stop offset="1" stop-color="#2a2a2a"/></linearGradient><linearGradient id="b2r" gradientUnits="userSpaceOnUse" x1="435.5" y1="566.0" x2="438.0" y2="586.8"><stop offset="0" stop-color="#3a3a3a"/><stop offset=".3" stop-color="#4d4d4d"/><stop offset=".7" stop-color="#3a3a3a"/><stop offset="1" stop-color="#2a2a2a"/></linearGradient><linearGradient id="b3r" gradientUnits="userSpaceOnUse" x1="440.0" y1="618.0" x2="442.8" y2="637.5"><stop offset="0" stop-color="#3a3a3a"/><stop offset=".3" stop-color="#4d4d4d"/><stop offset=".7" stop-color="#3a3a3a"/><stop offset="1" stop-color="#2a2a2a"/></linearGradient><linearGradient id="gwside" x1="0" y1="0" x2="1" y2="0"><stop offset="0" stop-color="#d8d8d8"/><stop offset=".5" stop-color="#c2c2c2"/><stop offset="1" stop-color="#b4b4b4"/></linearGradient><linearGradient id="gwfront" x1="0" y1="0" x2="0" y2="1"><stop offset="0" stop-color="#f2f2f2"/><stop offset="1" stop-color="#eaeaea"/></linearGradient></defs>
<polygon points="21.0,100.0 330.0,100.0 360.0,480.0 21.0,530.0" fill="#a6a6a6" />
<polygon points="90.0,100.0 322.0,100.0 324.0,128.6 303.3,127.2" fill="#a5b9d4" />
<path d="M90,100 L303.3,127.2" stroke="#7d8da3" stroke-width="1" stroke-dasharray="2.5 1.5" fill="none"/>
<linearGradient id="gceil" gradientUnits="userSpaceOnUse" x1="207" y1="100" x2="322" y2="100"><stop offset="0" stop-color="#7f8b9a"/><stop offset=".6" stop-color="#6f7b89"/><stop offset="1" stop-color="#8b96a3"/></linearGradient>
<polygon points="207.0,100.0 322.0,100.0 322.0,115.5" fill="url(#gceil)" />
<polygon points="21.0,545.0 420.0,470.0 480.0,720.0 372.0,747.0 21.0,888.3" fill="#d8d8d8" />
<polygon points="21.0,544.0 260.0,503.5 340.0,491.5 352.0,489.0 352.0,500.0 340.0,502.0 260.0,515.4 21.0,559.5" fill="#9b9b9b" />
<polygon points="21.0,516.0 260.0,479.6 340.0,466.4 364.0,462.5 364.0,488.0 340.0,491.5 260.0,503.5 21.0,544.5" fill="#173a73" />
<polygon points="21.0,516.0 260.0,479.6 340.0,466.4 364.0,462.5 364.0,479.0 340.0,482.8 260.0,497.0 21.0,535.5" fill="#1c4587" />
<polygon points="303.3,127.2 323.0,128.0 345.5,340.0 354.2,430.0 358.0,470.0 340.4,470.0 336.6,430.0 326.7,340.0" fill="#1c4587" />
<polygon points="311.0,127.5 313.0,127.6 336.6,340.0 345.7,430.0 349.6,470.0 347.6,470.0 343.7,430.0 334.6,340.0" fill="#2353ab" />
<polygon points="21.0,888.3 311.6,771.4 372.0,747.0 440.0,719.6 524.5,736.7 634.0,774.0 879.0,856.0 1220.6,971.0 21.0,971.0" fill="#00466b" />
<path d="M541.5,753.4 L1180,970.5" stroke="#072b40" stroke-width="1" stroke-dasharray="6 1.5" fill="none"/>
<polygon points="320.0,100.0 442.0,100.0 458.0,340.0 463.5,430.0 469.0,555.0 477.4,640.0 480.0,724.0 425.0,745.0 385.0,748.0 354.2,430.0 345.5,340.0" fill="#1a958b" />
<polygon points="340.0,100.0 375.6,100.0 397.0,340.0 405.0,430.0 413.1,555.0 421.3,653.0 426.0,745.0 400.0,748.0 380.0,555.0 360.0,340.0" fill="#1b978d" />
<polygon points="375.0,100.0 379.0,100.0 398.3,340.0 406.0,430.0 414.0,555.0 422.0,653.0 426.0,706.0 424.5,706.0 420.5,653.0 412.4,555.0 404.3,430.0 396.5,340.0" fill="#2fd0c8" />
<polygon points="320.0,100.0 352.0,100.0 377.0,340.0 385.0,430.0 395.7,555.0 407.0,653.0 417.7,748.0 409.5,748.7 385.0,748.0 354.2,430.0 345.5,340.0" fill="#26c6c0" />
<polygon points="462.3,693.4 476.7,689.0 479.2,724.0 463.0,720.4" fill="#2fcfc8" />
<polygon points="417.7,739.0 463.0,720.4 480.5,724.0 481.8,726.7 417.7,748.4" fill="#b4641c" />
<polygon points="410.8,750.6 481.8,726.7 481.8,729.8 410.8,753.9" fill="#f3951d" />
<polygon points="410.8,753.9 481.8,729.8 483.0,737.4 415.8,763.7" fill="#c1c1c1" />
<polygon points="409.3,751.0 410.8,750.6 415.8,763.7 411.5,761.0" fill="#e2e2e2" />
<ellipse cx="429" cy="740.5" rx="5.2" ry="2.2" fill="#1673c0"/><rect x="425.8" y="728" width="6.4" height="12.5" fill="#2196ea"/><rect x="426.8" y="722" width="4.4" height="7" fill="#2ea2f2"/><ellipse cx="429" cy="722" rx="2.2" ry="1" fill="#55b8fa"/>
<ellipse cx="455" cy="730.5" rx="5.2" ry="2.2" fill="#1673c0"/><rect x="451.8" y="718" width="6.4" height="12.5" fill="#2196ea"/><rect x="452.8" y="712" width="4.4" height="7" fill="#2ea2f2"/><ellipse cx="455" cy="712" rx="2.2" ry="1" fill="#55b8fa"/>
<polygon points="376.3,315.5 380.8,314.5 381.5,320.0 377.0,321.0" fill="#a9a6a4" />
<linearGradient id="grod" gradientUnits="userSpaceOnUse" x1="0" y1="-3" x2="0" y2="3" gradientTransform="translate(200 373.6) rotate(29.3)"><stop offset="0" stop-color="#585858"/><stop offset=".35" stop-color="#767676"/><stop offset="1" stop-color="#868686"/></linearGradient>
<polygon points="21.0,269.5 383.0,474.4 385.5,480.0 21.0,276.8" fill="url(#grod)" />
<path d="M390.8,467.5 C397,469 399.5,476 397.5,481.5 L397.8,488.5 L392.5,486.5 Z" fill="#e6e6e6"/>
<path d="M393,484 L407.6,493.4" stroke="#9a9a9a" stroke-width="3" fill="none"/>
<polygon points="296.5,784.0 329.0,798.3 369.4,777.7 340.0,766.0" fill="#333333" />
<polygon points="351.8,807.8 385.7,824.0 436.0,801.5 414.6,791.5 380.0,795.0" fill="#333333" />
<polygon points="468.6,756.2 489.0,763.0 541.4,750.5 524.5,744.3 500.0,744.0" fill="#333333" />
<path d="M306.6,710.4 A20.2,6.1 -6.6 0 0 346.7,705.6 L354.7,777.7 A19.9,7.0 -6.6 0 1 315.3,782.3 Z" fill="url(#gply)"/><path d="M297.4,634.4 A20.6,5.1 -6.6 0 0 338.2,629.6 L346.7,705.6 A20.2,6.1 -6.6 0 1 306.6,710.4 Z" fill="url(#gpld)"/><path d="M287.5,552.5 A21.0,4.1 -6.6 0 0 329.1,547.5 L338.2,629.6 A20.6,5.1 -6.6 0 1 297.4,634.4 Z" fill="url(#gply)"/><path d="M277.3,468.3 A21.4,3.0 -6.6 0 0 319.7,463.3 L329.1,547.5 A21.0,4.1 -6.6 0 1 287.5,552.5 Z" fill="url(#gpld)"/><ellipse cx="298.5" cy="465.8" rx="21.4" ry="3.0" fill="#222222" transform="rotate(-6.6 298.5 465.8)"/>
<path d="M482.0,690.4 A18.6,5.7 -4.4 0 0 518.8,685.6 L523.4,749.1 A18.3,6.5 -4.4 0 1 487.1,754.4 Z" fill="url(#gpry)"/><path d="M475.8,614.1 A18.8,4.7 -4.4 0 0 513.3,609.9 L518.8,685.6 A18.6,5.7 -4.4 0 1 482.0,690.4 Z" fill="url(#gprd)"/><path d="M469.8,538.8 A19.1,3.7 -4.4 0 0 507.8,535.2 L513.3,609.9 A18.8,4.7 -4.4 0 1 475.8,614.1 Z" fill="url(#gpry)"/><path d="M463.1,456.5 A19.4,2.6 -4.4 0 0 501.9,453.5 L507.8,535.2 A19.1,3.7 -4.4 0 1 469.8,538.8 Z" fill="url(#gprd)"/><ellipse cx="482.5" cy="455.0" rx="19.4" ry="2.6" fill="#222222" transform="rotate(-4.4 482.5 455.0)"/>
<path d="M318.0,510.5 L343.0,516.7 L344.0,541.0 L314.0,532.3 A8.9,11.1 0 0 1 318.0,510.5 Z" fill="url(#b1l)"/>
<path d="M316.6,568.0 L349.0,578.0 L351.5,598.0 L314.0,588.5 A8.3,10.3 0 0 1 316.6,568.0 Z" fill="url(#b2l)"/>
<path d="M324.5,622.4 L355.6,633.0 L357.5,652.9 L322.0,643.5 A8.5,10.6 0 0 1 324.5,622.4 Z" fill="url(#b3l)"/>
<path d="M384.0,516.9 L473.6,500.4 A8.6,10.7 0 0 1 476.0,521.7 L386.0,541.8 Z" fill="url(#b1r)"/>
<path d="M391.0,579.0 L480.0,553.0 A8.7,10.9 0 0 1 483.0,574.5 L393.0,599.0 Z" fill="url(#b2r)"/>
<path d="M396.0,631.5 L484.0,604.5 A7.5,9.4 0 0 1 487.5,623.0 L398.0,652.0 Z" fill="url(#b3r)"/>
<path d="M364.4,733.2 A21.5,7.1 -5.8 0 0 407.2,728.8 L414.4,802.8 A21.2,8.0 -5.8 0 1 372.2,807.2 Z" fill="url(#gpmy)"/><path d="M355.6,650.7 A21.9,6.1 -5.8 0 0 399.1,646.3 L407.2,728.8 A21.5,7.1 -5.8 0 1 364.4,733.2 Z" fill="url(#gpmd)"/><path d="M346.6,566.3 A22.2,5.1 -5.8 0 0 390.9,561.7 L399.1,646.3 A21.9,6.1 -5.8 0 1 355.6,650.7 Z" fill="url(#gpmy)"/><path d="M337.2,478.3 A22.6,4.0 -5.8 0 0 382.3,473.7 L390.9,561.7 A22.2,5.1 -5.8 0 1 346.6,566.3 Z" fill="url(#gpmd)"/><ellipse cx="359.8" cy="476.0" rx="22.6" ry="4.0" fill="#222222" transform="rotate(-5.8 359.8 476.0)"/>
<polygon points="844.0,142.0 911.8,155.2 908.0,370.0 903.7,660.0 900.5,832.0 842.0,885.7 840.0,868.0" fill="#2f4fcf" />
<polygon points="606.5,181.6 842.7,165.7 840.0,868.5 635.4,800.7" fill="#3c66fa" />
<polygon points="605.2,163.2 844.0,142.0 842.7,165.7 606.5,181.6" fill="#1b40d8" />
<polygon points="635.4,800.7 840.0,868.5 840.3,885.5 636.6,814.5" fill="#1b40d8" />
<polygon points="838.2,166.0 842.7,165.7 840.1,868.5 835.8,867.0" fill="#2a4acb" />
<polygon points="838.4,142.6 842.8,142.2 842.7,165.7 838.3,166.0" fill="#1737c4" />
<polygon points="835.8,867.0 840.1,868.5 840.2,885.5 835.9,884.0" fill="#1737c4" />
<polygon points="842.8,142.2 845.8,142.6 843.0,884.5 840.2,885.5" fill="#3a60f0" />
<polygon points="670.6,181.6 758.5,177.3 758.5,194.0 670.6,199.0" fill="#1e45e2" />
<text x="714.5" y="193.5" class="lsf" font-size="13" fill="#8ea6f6" text-anchor="middle" transform="rotate(-2.9 714.5 189)" textLength="45" lengthAdjust="spacingAndGlyphs">DB-TS-A1</text>
<ellipse cx="700" cy="221" rx="4.4" ry="5.2" fill="#6a3fc0"/>
<ellipse cx="713.5" cy="220.7" rx="4.4" ry="5.2" fill="#7f99c9"/>
<ellipse cx="726.3" cy="220.2" rx="4.4" ry="5.2" fill="#0b6cf4"/>
<polygon points="823.8,209.7 843.0,209.0 843.0,225.0 823.8,225.5" fill="#1c3cc0" />
<rect x="833.5" y="213" width="1.5" height="7" fill="#0c1f6e"/>
<path d="M824.5,823.5 L840,826 L840,840.5 C832,842 825,838 824.5,831 Z" fill="#1c3cc0"/>
<rect x="833.5" y="828" width="1.3" height="6" fill="#d8e0ff"/>
<rect x="635" y="491" width="7.5" height="48" rx="3.5" fill="none" stroke="#3158e0" stroke-width="1"/>
<path d="M721.1,500.2 L709.6,525.6 L734.6,529.8 Z" fill="#4f72d0" stroke="#1c3fd2" stroke-width="1.4" stroke-linejoin="round"/><path d="M721.5,509 L719.5,517 L723,517.5 L720.5,524.5" stroke="#1c3fd2" stroke-width="2" fill="none"/>
<path d="M867,209.0 h9 M882,210.0 h9 M867,212.0 h9 M882,213.0 h9 M867,220.8 h9 M882,221.8 h9 M867,223.8 h9 M882,224.8 h9 M867,232.6 h9 M882,233.6 h9 M867,235.6 h9 M882,236.6 h9 M867,244.4 h9 M882,245.4 h9 M867,247.4 h9 M882,248.4 h9 M867,256.2 h9 M882,257.2 h9 M867,259.2 h9 M882,260.2 h9 M867,268.0 h9 M882,269.0 h9 M867,271.0 h9 M882,272.0 h9" stroke="#3d5cdb" stroke-width="1" fill="none"/>
<path d="M862,775.0 l11,-7 M876,766.0 l10,-6 M862,782.5 l11,-7 M876,773.5 l10,-6 M862,790.0 l11,-7 M876,781.0 l10,-6 M862,797.5 l11,-7 M876,788.5 l10,-6 M862,805.0 l11,-7 M876,796.0 l10,-6 M862,812.5 l11,-7 M876,803.5 l10,-6 M862,820.0 l11,-7 M876,811.0 l10,-6" stroke="#3d5cdb" stroke-width="1" fill="none"/>
<polygon points="1057.8,100.0 1096.5,100.0 1089.0,244.5 1069.6,573.7 1061.0,740.0 1049.8,934.0 1018.0,923.4 1026.0,740.0 1034.4,573.7 1050.3,244.5" fill="#d9d9d9" />
<polygon points="1096.5,100.0 1110.6,100.0 1103.0,244.5 1082.0,573.7 1073.0,740.0 1062.4,918.4 1049.8,934.0 1061.0,740.0 1069.6,573.7 1089.0,244.5" fill="#a4a4a4" />
<polygon points="1178.5,245.8 1181.5,243.0 1204.0,245.7 1197.0,340.0 1179.0,567.4 1153.8,587.5 1155.0,566.0" fill="url(#gwside)" />
<polygon points="939.0,247.0 1179.0,242.5 1178.5,246.0 939.5,251.0" fill="#ededed" />
<polygon points="939.7,271.0 1177.7,268.4 1155.0,566.0 933.0,536.0" fill="url(#gwfront)" />
<polygon points="939.7,250.8 1178.5,245.8 1177.7,268.4 939.7,271.0" fill="#4a5361" />
<polygon points="933.0,536.0 1155.0,566.0 1153.8,587.5 933.0,553.6" fill="#4a5361" />
<polygon points="1174.5,268.5 1178.0,268.4 1155.5,566.0 1152.5,565.6" fill="#dadada" />
<polygon points="991.0,276.7 1110.0,276.4 1110.0,294.8 991.0,294.8" fill="#151515" />
<text x="1048.5" y="291" class="lsf" font-size="14" fill="#f2f2f2" text-anchor="middle" textLength="46" lengthAdjust="spacingAndGlyphs">DB-LT1</text>
<circle cx="1028.9" cy="320.8" r="5.6" fill="#f01818"/>
<circle cx="1046.5" cy="320.8" r="5.6" fill="#f4e820"/>
<circle cx="1064" cy="320.8" r="5.6" fill="#1288e0"/>
<polygon points="1151.0,316.0 1174.0,316.5 1173.0,333.5 1150.5,332.0" fill="#2a2a2a" />
<rect x="1167" y="320.5" width="2" height="8.500" fill="#e8d818"/>
<polygon points="1138.2,507.9 1159.0,511.0 1158.0,526.5 1138.0,523.5" fill="#2a2a2a" />
<rect x="1152.500" y="514" width="2" height="8" fill="#e8d818"/>
<rect x="955.800" y="379.700" width="11.500" height="57" rx="5.500" fill="#fdfdfd" stroke="#d2d2d2" stroke-width="1"/><rect x="958.500" y="386" width="5" height="38" rx="2" fill="#f0f0f0" stroke="#dedede" stroke-width=".8"/><path d="M958,424 l5,0 M958.500,427 l4,0" stroke="#2a98e8" stroke-width="1.400"/>
<path d="M1044,381.500 L1025.600,412.300 L1060,414 Z" fill="#fff200" stroke="#111" stroke-width="2" stroke-linejoin="round"/>
<path d="M1044.500,391 L1046,397 L1042,401 L1045.500,401.500 L1041.500,410 L1040,405 L1043,404.500 L1040.500,400 Z" fill="#222"/>
<path d="M1176.7,311.8 l4,-0.3 M1182.7,311.4 l4,-0.3 M1188.7,311.0 l4,-0.3 M1176.2,319.1 l4,-0.3 M1182.2,318.6 l4,-0.3 M1188.2,318.1 l4,-0.3 M1175.6,326.5 l4,-0.4 M1181.6,325.8 l4,-0.4 M1187.6,325.2 l4,-0.4 M1175.1,333.8 l4,-0.5 M1181.1,333.1 l4,-0.5 M1187.1,332.3 l4,-0.5 M1174.6,341.2 l4,-0.6 M1180.6,340.3 l4,-0.6 M1186.6,339.4 l4,-0.6 M1174.0,348.5 l4,-0.7 M1180.0,347.5 l4,-0.7 M1186.0,346.5 l4,-0.7 M1173.5,355.8 l4,-0.8 M1179.5,354.7 l4,-0.8 M1185.5,353.6 l4,-0.8 M1172.9,363.2 l4,-0.8 M1178.9,361.9 l4,-0.8 M1184.9,360.7 l4,-0.8 M1172.4,370.5 l4,-0.9 M1178.4,369.1 l4,-0.9 M1184.4,367.8 l4,-0.9 M1171.9,377.8 l4,-1.0 M1177.9,376.3 l4,-1.0 M1183.9,374.8 l4,-1.0 M1171.3,385.2 l4,-1.1 M1177.3,383.6 l4,-1.1 M1183.3,381.9 l4,-1.1 M1166.3,453.6 l4,-1.8 M1172.3,450.8 l4,-1.8 M1178.3,448.1 l4,-1.8 M1184.3,445.3 l4,-1.8 M1165.8,461.1 l4,-1.9 M1171.8,458.2 l4,-1.9 M1177.8,455.3 l4,-1.9 M1183.8,452.4 l4,-1.9 M1165.2,468.5 l4,-2.0 M1171.2,465.5 l4,-2.0 M1177.2,462.4 l4,-2.0 M1183.2,459.4 l4,-2.0 M1164.7,475.9 l4,-2.1 M1170.7,472.8 l4,-2.1 M1176.7,469.6 l4,-2.1 M1182.7,466.5 l4,-2.1 M1164.1,483.4 l4,-2.2 M1170.1,480.1 l4,-2.2 M1176.1,476.8 l4,-2.2 M1182.1,473.6 l4,-2.2 M1163.6,490.8 l4,-2.3 M1169.6,487.4 l4,-2.3 M1175.6,484.0 l4,-2.3 M1181.6,480.6 l4,-2.3 M1163.1,498.2 l4,-2.3 M1169.1,494.7 l4,-2.3 M1175.1,491.2 l4,-2.3 M1181.1,487.7 l4,-2.3 M1162.5,505.7 l4,-2.4 M1168.5,502.0 l4,-2.4 M1174.5,498.4 l4,-2.4 M1180.5,494.7 l4,-2.4 M1162.0,513.1 l4,-2.5 M1168.0,509.3 l4,-2.5 M1174.0,505.6 l4,-2.5 M1180.0,501.8 l4,-2.5 M1161.4,520.6 l4,-2.6 M1167.4,516.7 l4,-2.6 M1173.4,512.8 l4,-2.6 M1179.4,508.9 l4,-2.6 M1160.9,528.0 l4,-2.7 M1166.9,524.0 l4,-2.7 M1172.9,520.0 l4,-2.7 M1178.9,515.9 l4,-2.7" stroke="#e4e4e4" stroke-width="1.800" fill="none"/>
<polygon points="1290.0,280.2 1540.5,280.7 1494.0,583.2 1262.8,554.3" fill="#d8d8d8" />
<polygon points="1316.0,316.7 1497.0,320.0 1489.5,377.0 1311.0,370.0" fill="#000" />
<polygon points="1307.6,399.6 1484.0,409.6 1476.5,464.4 1302.3,451.0" fill="#000" />
<polygon points="1298.8,479.7 1470.9,495.8 1463.8,549.3 1294.2,529.7" fill="#000" />
<g opacity="0.9">
<ellipse cx="1555.600" cy="211.500" rx="67" ry="20" fill="none" stroke="#ececec" stroke-width="2"/>
<ellipse cx="1555.600" cy="210.500" rx="52" ry="14.500" fill="#f7f7f7" stroke="#eeeeee" stroke-width="1.500"/>
<ellipse cx="1560" cy="212" rx="36" ry="9" fill="#ebebeb"/>
<polygon points="1522.300,158.300 1549,152.400 1589,155.800 1563.700,164" fill="#f6f6f6" stroke="#d9d9d9" stroke-width="1" stroke-dasharray="3 2"/>
<polygon points="1522.300,158.300 1563.700,164 1563.700,214 1523,204.700" fill="#eeeeee" stroke="#d4d4d4" stroke-width="1" stroke-dasharray="4 2"/>
<polygon points="1563.700,164 1589,155.800 1588,194 1563.700,214" fill="#f2f2f2" stroke="#d4d4d4" stroke-width="1" stroke-dasharray="4 2"/>
<text x="0" y="0" class="lsf" font-size="12" font-weight="bold" fill="#cbcbcb" text-anchor="middle" transform="matrix(1 0.138 0 1 1543 190.5)" textLength="29" lengthAdjust="spacingAndGlyphs">FRONT</text>
<text x="0" y="0" class="lsf" font-size="10.5" font-weight="bold" fill="#cfcfcf" text-anchor="middle" transform="matrix(1 -0.324 0 1 1576.5 188.5)" textLength="15" lengthAdjust="spacingAndGlyphs">RIGHT</text>
</g>
<rect x="1602" y="272" width="34" height="285.500" rx="4" fill="#f5f5f5" stroke="#dedede" stroke-width="1.200"/>
<g fill="none" stroke="#cfcfcf" stroke-width="1.200">
<circle cx="1630" cy="277.500" r="2.800"/><path d="M1628.500,276 l3,3 M1631.500,276 l-3,3" stroke-width=".8"/>
<path d="M1608,303 a11,11 0 0 0 22,0 v-11 h-11 a11,11 0 0 0 -11,11 z"/><circle cx="1619" cy="303" r="6.500"/>
<path d="M1609,345 c-3,-4 -1,-6 2,-3 l2,2 v-10 c0,-2 3,-2 3,0 v-3 c0,-2 3,-2 3,0 v1 c0,-2 3,-2 3,0 v3 c0,-2 3,-2 3,0 v12 c0,5 -3,9 -8,9 c-4,0 -6,-3 -8,-6 z"/>
<rect x="1607" y="361" width="16" height="16"/><circle cx="1623" cy="376" r="4.500" fill="#f5f5f5"/><path d="M1626,379.500 l5,5" stroke-width="2"/>
<ellipse cx="1619" cy="412" rx="12" ry="4.500"/><ellipse cx="1619" cy="412" rx="4.500" ry="11"/><path d="M1617,409 h4 M1619,407 v4 M1622,413 h3"/>
<circle cx="1619" cy="448" r="9.500"/><circle cx="1619" cy="448" r="4.500" fill="#d6dccc" stroke="#c4c9bb"/><path d="M1608,455 c1,5 5,6 7,4 M1630,455 c-1,5 -5,6 -7,4"/>
<ellipse cx="1613" cy="485" rx="3.500" ry="5.500" transform="rotate(-15 1613 485)"/><ellipse cx="1625" cy="494" rx="3.500" ry="5.500" transform="rotate(-15 1625 494)"/><ellipse cx="1614.500" cy="494.500" rx="2.200" ry="1.500"/><ellipse cx="1626.500" cy="503.500" rx="2.200" ry="1.500"/>
<path d="M1612,513 v20 l5,-4.500 l4,8.500 l3.500,-1.700 l-4,-8 h7 z"/>
<circle cx="1630" cy="551" r="2.800"/><path d="M1628.500,551 h3" stroke-width=".8"/>
</g>
<path d="M1616.500,323 h5 l-2.500,3 z" fill="#c9c9c9"/>
<path d="M1616.500,393 h5 l-2.500,3 z" fill="#c9c9c9"/>
<path d="M1616.500,430 h5 l-2.500,3 z" fill="#c9c9c9"/>
<path d="M1616.500,467 h5 l-2.500,3 z" fill="#c9c9c9"/>
<path d="M1616.500,507 h5 l-2.500,3 z" fill="#c9c9c9"/>
<rect x="51" y="918.500" width="196" height="22" fill="#5f859c"/>
<text x="55.800" y="936" class="dvf" font-size="12.500" fill="#eef3f6" textLength="186.700" lengthAdjust="spacingAndGlyphs">XA1(3)-YA18(-2) : UTF TOP (19)</text>
</svg></div>
<div class="abs" style="left:1637px;top:100px;width:4px;height:871px;background:#8f8f8f"></div>
<div class="abs" style="left:1641px;top:100px;width:275px;height:871px;background:#f0f0f0;border:1px solid #6e6e6e;border-bottom-color:#8a8a8a"></div>
<div class="abs" style="left:1642px;top:101px;width:273px;height:21px;background:linear-gradient(#c6ddf4,#bdd7f1)"></div>
<div class="abs" style="left:1642px;top:122px;width:273px;height:1px;background:#6e6e6e"></div>
<span class="tx" style="left:1647.4px;top:105.6px;font-size:11px;line-height:12.6px;letter-spacing:-0.15px;color:#000;">Properties</span>
<svg class="abs" style="left:1876px;top:103px" width="16" height="16" viewBox="0 0 16 16"><path d="M1.500,13.500 L6,9" stroke="#555" stroke-width="1"/><circle cx="9" cy="6" r="3.600" fill="#c9c9c9" stroke="#666" stroke-width="1"/><circle cx="11" cy="4.500" r="2.300" fill="#ececec" stroke="#777" stroke-width=".8"/></svg>
<svg class="abs" style="left:1899px;top:106px" width="10" height="10" viewBox="0 0 10 10"><path d="M1,1 L9,9 M9,1 L1,9" stroke="#111" stroke-width="1.800"/></svg>
<div class="abs" style="left:1650px;top:131px;width:226px;height:20px;background:#f2f2f2;border:1px solid #dcdcdc;border-bottom:none"></div>
<div class="abs" style="left:1691px;top:132px;width:1px;height:19px;background:#dcdcdc"></div>
<div class="abs" style="left:1795px;top:132px;width:1px;height:19px;background:#dcdcdc"></div>
<span class="tx" style="left:1655.6px;top:135.7px;font-size:11px;line-height:12.6px;letter-spacing:-0.47px;color:#000;">Level</span>
<span class="tx" style="left:1697.5px;top:135.7px;font-size:11px;line-height:12.6px;letter-spacing:-0.15px;color:#000;">Distribution System</span>
<span class="tx" style="left:1801.6px;top:135.7px;font-size:11px;line-height:12.6px;letter-spacing:-0.26px;color:#000;">Phase Created</span>
<div class="abs" style="left:1876px;top:132px;width:16px;height:16px;background:#e9e9e9;border:1px solid #c9c9c9"></div>
<svg class="abs" style="left:1876px;top:132px" width="16" height="16"><path d="M9,4 L5,7.500 L9,11 Z" fill="#111"/></svg>
<div class="abs" style="left:1892px;top:132px;width:16px;height:16px;background:#e9e9e9;border:1px solid #c9c9c9"></div>
<svg class="abs" style="left:1892px;top:132px" width="16" height="16"><path d="M6,4 L10,7.500 L6,11 Z" fill="#111"/></svg>
<div class="abs" style="left:1648px;top:151px;width:260px;height:812px;background:#fff;border:1px solid #e3e3e3"></div>
<div class="abs" style="left:1652px;top:154px;width:253px;height:806px;background:#fff;border:1px solid #828790"></div>
<div class="abs" style="left:1795px;top:156px;width:1px;height:24px;background:#e5e5e5"></div>
<div class="abs" id="plist" style="left:1653px;top:155px;width:251px;height:786px;overflow:hidden;font-size:11px;letter-spacing:-0.3px;color:#000;white-space:nowrap">
<span class="lt" style="left:7px;top:7px">Property</span><span class="lt" style="left:149px;top:7px">Value</span>
<span class="lt" style="left:7px;top:27.6px">Name</span><span class="lt" style="left:149px;top:27.6px">BW_ DB-TS-</span>
<span class="lt" style="left:7px;top:44.6px">Category</span><span class="lt" style="left:149px;top:44.6px">Electrical Equipment</span>
<span class="lt" style="left:7px;top:61.6px">Id</span><span class="lt" style="left:149px;top:61.6px">6788834</span>
<span class="lt" style="left:7px;top:78.6px">IP</span><span class="lt" style="left:149px;top:78.6px">42</span>
<span class="lt" style="left:7px;top:95.6px">Material Main</span><span class="lt" style="left:149px;top:95.6px">Electro-Galvanised steel</span>
<span class="lt" style="left:7px;top:112.6px">Manufacturer name</span><span class="lt" style="left:149px;top:112.6px">---</span>
<span class="lt" style="left:7px;top:129.6px">COBie.Type.Manufacturer</span><span class="lt" style="left:149px;top:129.6px">POWERWELL VIETNAM</span>
<span class="lt" style="left:7px;top:146.6px">Neutral Rating</span><span class="lt" style="left:149px;top:146.6px">0.00%</span>
<span class="lt" style="left:7px;top:163.6px">COBie.Type.NominalLength</span><span class="lt" style="left:149px;top:163.6px">0,000 m</span>
<span class="lt" style="left:7px;top:180.6px">Coating</span><span class="lt" style="left:149px;top:180.6px">Epoxy powder</span>
<span class="lt" style="left:7px;top:197.6px">Keynote</span><span class="lt" style="left:149px;top:197.6px">DB_MCC</span>
<span class="lt" style="left:7px;top:214.6px">Load Classification</span><span class="lt" style="left:149px;top:214.6px">ElectricalLoadClassification</span>
<span class="lt" style="left:7px;top:231.6px">Manufacturer country</span><span class="lt" style="left:149px;top:231.6px">---</span>
<span class="lt" style="left:7px;top:248.6px">COBie.Type.CreatedBy</span><span class="lt" style="left:149px;top:248.6px">congmv@goldenlotus.vn</span>
<span class="lt" style="left:7px;top:265.6px">COBie.Type.Color</span><span class="lt" style="left:149px;top:265.6px">DP4198 TEXTURE</span>
<span class="lt" style="left:7px;top:282.6px">Number of Poles</span><span class="lt" style="left:149px;top:282.6px">3</span>
<span class="lt" style="left:7px;top:299.6px">COBie.Type.Size</span><span class="lt" style="left:149px;top:299.6px">WxHxD: 800x2158x300</span>
<span class="lt" style="left:7px;top:316.6px">Switchboard_Type</span><span class="lt" style="left:149px;top:316.6px">Wall Mounted</span>
<span class="lt" style="left:7px;top:333.6px">COBie.Type.Length</span><span class="lt" style="left:149px;top:333.6px">0,000 m</span>
<span class="lt" style="left:7px;top:350.6px">Neutral Bus</span><span class="lt" style="left:149px;top:350.6px">No</span>
<span class="lt" style="left:7px;top:367.6px">Color</span><span class="lt" style="left:149px;top:367.6px">Material "Orange Metal"</span>
<span class="lt" style="left:7px;top:384.6px">COBie.Type.Area</span><span class="lt" style="left:149px;top:384.6px">0,000 m²</span>
<span class="lt" style="left:7px;top:401.6px">Forms</span><span class="lt" style="left:149px;top:401.6px">1</span>
<span class="lt" style="left:7px;top:418.6px">COBie.Type.NominalHeight</span><span class="lt" style="left:149px;top:418.6px">0,000 m</span>
<span class="lt" style="left:7px;top:435.6px">Location</span><span class="lt" style="left:149px;top:435.6px">Indoor</span>
<span class="lt" style="left:7px;top:452.6px">Cost</span><span class="lt" style="left:149px;top:452.6px">0.00</span>
<span class="lt" style="left:7px;top:469.6px">COBie.Type.NominalWidth</span><span class="lt" style="left:149px;top:469.6px">0,000 m</span>
<span class="lt" style="left:7px;top:486.6px">Family Name</span><span class="lt" style="left:149px;top:486.6px">BW-E-Distribution board</span>
<span class="lt" style="left:7px;top:503.6px">COBie.Type.Category</span><span class="lt" style="left:149px;top:503.6px">23-80 30 11 17 : Distribution</span>
<span class="lt" style="left:7px;top:520.6px">COBie.Type</span><span class="lt" style="left:149px;top:520.6px">Yes</span>
<span class="lt" style="left:7px;top:537.6px">Thickness</span><span class="lt" style="left:149px;top:537.6px">Minimum 50 Microns</span>
<span class="lt" style="left:7px;top:554.6px">Default Elevation</span><span class="lt" style="left:149px;top:554.6px">0,000 m</span>
<span class="lt" style="left:7px;top:571.6px">COBie.Type.Name</span><span class="lt" style="left:149px;top:571.6px">Electrical Equipment_BW</span>
<span class="lt" style="left:7px;top:588.6px">Ground Bus</span><span class="lt" style="left:149px;top:588.6px">No</span>
<span class="lt" style="left:7px;top:605.6px">Operation</span><span class="lt" style="left:149px;top:605.6px">Front</span>
<span class="lt" style="left:7px;top:622.6px">COBie.Type.CreatedOn</span><span class="lt" style="left:149px;top:622.6px">2021-03-03T15:47:22</span>
<span class="lt" style="left:7px;top:639.6px">COBie.Type.Material</span><span class="lt" style="left:149px;top:639.6px">Hot Rolled Steel</span>
<span class="lt" style="left:7px;top:656.6px">Modules</span><span class="lt" style="left:149px;top:656.6px">1</span>
<span class="lt" style="left:7px;top:673.6px">Cable Entry</span><span class="lt" style="left:149px;top:673.6px">Top &amp; Bottom</span>
<span class="lt" style="left:7px;top:690.6px">COBie.Type.Replacement...</span><span class="lt" style="left:149px;top:690.6px">0.00</span>
<span class="lt" style="left:7px;top:707.6px">COBie.Type.Description</span><span class="lt" style="left:149px;top:707.6px">BW-E-Distribution board</span>
<span class="lt" style="left:7px;top:724.6px">Type Name</span><span class="lt" style="left:149px;top:724.6px">BW_ DB-TS-</span>
</div>
<div class="abs" style="left:1654px;top:942px;width:249px;height:16px;background:#f0f0f0"></div>
<div class="abs" style="left:1671px;top:942px;width:138px;height:16px;background:#cdcdcd"></div>
<svg class="abs" style="left:1654px;top:942px" width="249" height="16"><path d="M12,4 L8,8 L12,12 M237,4 L241,8 L237,12" fill="none" stroke="#555" stroke-width="1.800"/></svg>
<div class="abs" style="left:0;top:971px;width:1919px;height:24px;background:#a0a0a0"></div>
<span class="tx" style="left:9.5px;top:980.1px;font-size:12px;line-height:13.8px;letter-spacing:-0.92px;color:#111;">Ready</span>
<svg class="abs" style="left:1600px;top:975px" width="135" height="18"><g fill="#adadad" stroke="#b4b4b4" stroke-width="1"><path d="M12,2 L4,9 L12,16 Z"/><rect x="14" y="2" width="3" height="14"/><path d="M34,2 L26,9 L34,16 Z"/><path d="M98,2 L106,9 L98,16 Z"/><rect x="112" y="2" width="3" height="14"/><path d="M118,2 L126,9 L118,16 Z"/></g></svg>
<span class="tx" style="left:1652.6px;top:976.6px;font-size:12px;line-height:13.8px;letter-spacing:-0.42px;color:#111;">1 of 1</span>
<svg class="abs" style="left:1731px;top:978px" width="17" height="16" viewBox="0 0 17 16"><rect x=".500" y=".500" width="15" height="14" rx="1" fill="#eef0f4" stroke="#555b66" stroke-width="1"/><rect x=".500" y=".500" width="15" height="2.500" fill="#6a7180"/><path d="M3,6.500 H5 M7,6.500 H13 M3,10.500 H5 M7,10.500 H13" stroke="#5d6c8a" stroke-width="1.300"/></svg>
<div class="abs" style="left:1756px;top:976px;width:1px;height:18px;background:#6f6f6f"></div><div class="abs" style="left:1757px;top:976px;width:1px;height:18px;background:#e8e8e8"></div>
<div class="abs" style="left:1771px;top:987px;width:30px;height:8px;background:#d4d4d4;border:1px solid #222"></div>
<div class="abs" style="left:1772px;top:988px;width:29px;height:6px;background:#0000e0"></div>
<div class="abs" style="left:1806px;top:987px;width:30px;height:8px;background:#d4d4d4;border:1px solid #222"></div>
<div class="abs" style="left:1807px;top:988px;width:13px;height:6px;background:#0000e0"></div>
<div class="abs" style="left:1841px;top:987px;width:30px;height:8px;background:#d4d4d4;border:1px solid #222"></div>
<svg class="abs" style="left:1771px;top:975px" width="100" height="12"><rect x="1.500" y="3.500" width="10" height="4" fill="#e8e8e8" stroke="#111" stroke-width="1"/><rect x="1.500" y="3.500" width="2.500" height="4" fill="#d01010"/><path d="M11.500,3.500 L15.500,5.500 L11.500,7.500 Z" fill="#e8d020" stroke="#111" stroke-width=".8"/><path d="M37,4 V9.500 C37,12 44,12 44,9.500 V4" fill="#f2ea10" stroke="#111" stroke-width="1"/><ellipse cx="40.500" cy="4" rx="3.500" ry="1.800" fill="#f6f060" stroke="#111" stroke-width="1"/><g fill="none" stroke="#111" stroke-width="1"><path d="M72,2.500 H84 M78,2.500 V10 M78,3 L73,8 M78,3 L83,8"/><rect x="70.500" y="1.500" width="2" height="2" fill="#eee"/><rect x="83.500" y="1.500" width="2" height="2" fill="#eee"/><rect x="72.500" y="7.500" width="2" height="2" fill="#eee"/><rect x="82.500" y="7.500" width="2" height="2" fill="#eee"/><rect x="77" y="9.500" width="2" height="2" fill="#eee"/></g></svg>
<span class="tx" style="left:1879.0px;top:981.0px;font-size:10px;line-height:11.5px;letter-spacing:-0.75px;color:#111;">1789 MB</span>
</div></body></html>
